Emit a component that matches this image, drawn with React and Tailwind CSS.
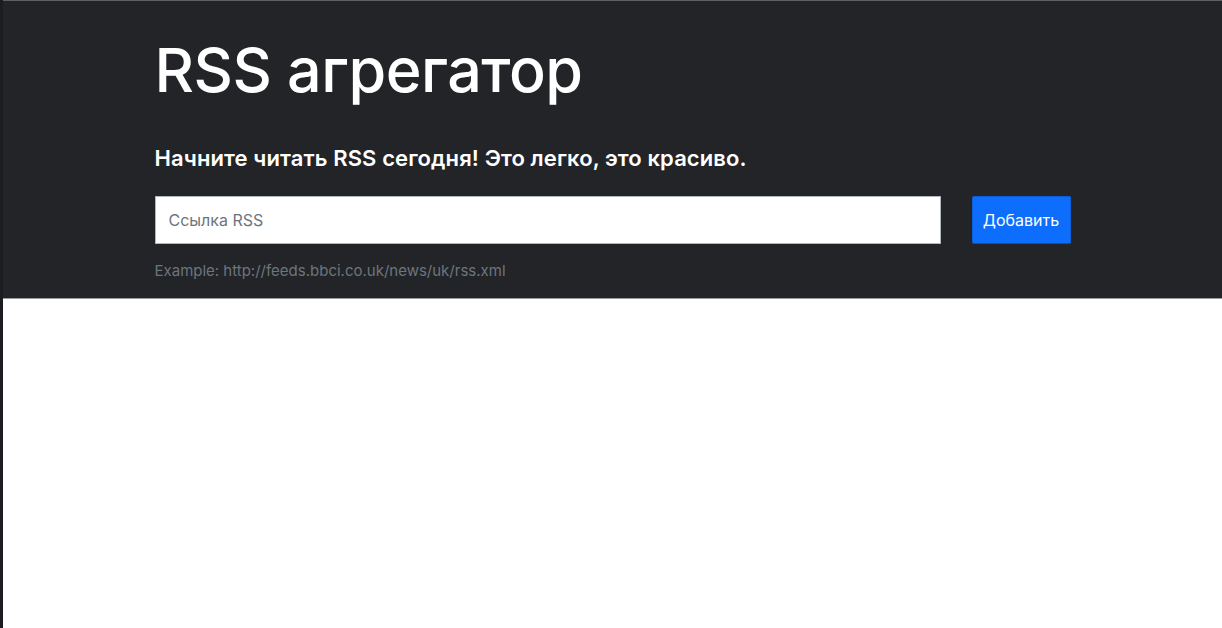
export default function App() {
  return (
    <div className="min-h-screen flex bg-white font-['Inter','Liberation_Sans',sans-serif]">
      {/* left edge strip */}
      <div className="w-[3px] shrink-0 bg-[#1b1d21]" />

      <div className="flex-1 min-w-0">
        <section className="bg-[#232428] border-t border-t-[#5e6064] border-b border-b-[#9a9b9d]">
          <div className="w-[916px] mx-auto pt-[33px] pb-[15px]">
            <h1 className="text-[61px] leading-[1.2] font-medium text-white tracking-[-0.5px]">
              RSS агрегатор
            </h1>
            <p className="mt-[35px] text-[22px] leading-[1.5] font-semibold text-white tracking-[0.1px]">
              Начните читать RSS сегодня! Это легко, это красиво.
            </p>

            <form className="mt-[21px] flex items-stretch gap-[31px]" onSubmit={(e) => e.preventDefault()}>
              <input
                type="text"
                placeholder="Ссылка RSS"
                className="flex-1 min-w-0 h-[48px] px-[13px] bg-white border border-[#adb5bd] text-[16px] text-[#212529] placeholder:text-[#6c757d] outline-none"
              />
              <button
                type="submit"
                className="w-[99px] shrink-0 h-[48px] bg-[#0d6efd] border border-[#0b5ed7] border-b-[#0a4fb8] rounded-[2px] text-[16px] text-white"
              >
                Добавить
              </button>
            </form>

            <p className="mt-[16px] text-[15px] leading-[1.5] text-[#6c757d]">
              Example: http://feeds.bbci.co.uk/news/uk/rss.xml
            </p>
          </div>
        </section>
      </div>
    </div>
  );
}
